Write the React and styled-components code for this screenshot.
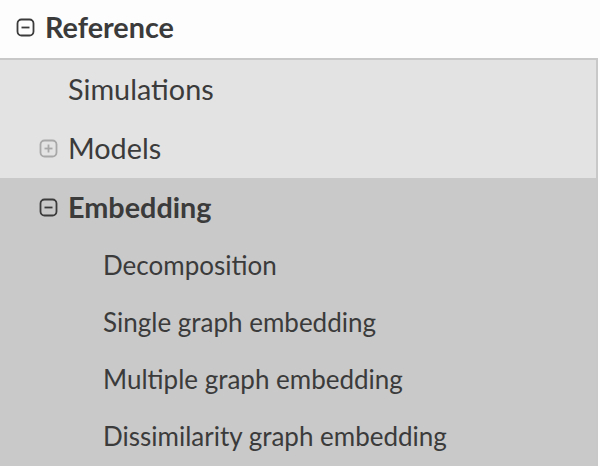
import React from "react";
import styled, { createGlobalStyle } from "styled-components";

const Global = createGlobalStyle`
  html, body { margin: 0; padding: 0; background: #fdfdfd; }
  body { font-family: Lato, "Open Sans", sans-serif; color: #3b3b3b; }
`;

const Tree = styled.div`
  width: 600px;
  height: 466px;
  overflow: hidden;
  background: #fdfdfd;
`;

const Row = styled.div`
  box-sizing: border-box;
  display: flex;
  align-items: center;
  height: ${(p) => p.$h || 59}px;
  line-height: ${(p) => p.$h || 59}px;
  padding-left: ${(p) => p.$indent}px;
  font-size: ${(p) => p.$size || 28.8}px;
  font-weight: ${(p) => (p.$bold ? 700 : 400)};
  white-space: nowrap;
`;

const TopRow = styled(Row)`
  height: 58px;
  line-height: 54px;
  padding-bottom: 4px;
`;

const Panel = styled.div`
  width: 596px;
  border-top: 2px solid #c8c8c8;
  border-right: 2px solid #c8c8c8;
  background: #e3e3e3;
`;

const Section = styled.div`
  background: #c9c9c9;
  padding-bottom: 20px;
`;

const IconBox = styled.svg`
  width: 19px;
  height: 19px;
  flex: none;
  margin-left: -1px;
  margin-right: 10px;
`;

const ToggleIcon = ({ open, color }) => (
  <IconBox viewBox="0 0 19 19">
    <rect x="1.5" y="1.5" width="16" height="16" rx="4" fill="none" stroke={color} strokeWidth="1.8" />
    <line x1="5.5" y1="9.5" x2="13.5" y2="9.5" stroke={color} strokeWidth="1.8" />
    {!open && <line x1="9.5" y1="5.5" x2="9.5" y2="13.5" stroke={color} strokeWidth="1.8" />}
  </IconBox>
);

export default function App() {
  return (
    <>
      <Global />
      <Tree>
        <TopRow $indent={17} $bold>
          <ToggleIcon open color="#3b3b3b" />
          Reference
        </TopRow>
        <Panel>
          <Row $indent={68}>Simulations</Row>
          <Row $indent={40}>
            <ToggleIcon color="#a8a8a8" />
            Models
          </Row>
          <Section>
            <Row $indent={40} $bold>
              <ToggleIcon open color="#3b3b3b" />
              Embedding
            </Row>
            <Row $indent={103} $size={26} $h={57}>Decomposition</Row>
            <Row $indent={103} $size={26} $h={57}>Single graph embedding</Row>
            <Row $indent={103} $size={26} $h={57}>Multiple graph embedding</Row>
            <Row $indent={103} $size={26} $h={57}>Dissimilarity graph embedding</Row>
          </Section>
        </Panel>
      </Tree>
    </>
  );
}
